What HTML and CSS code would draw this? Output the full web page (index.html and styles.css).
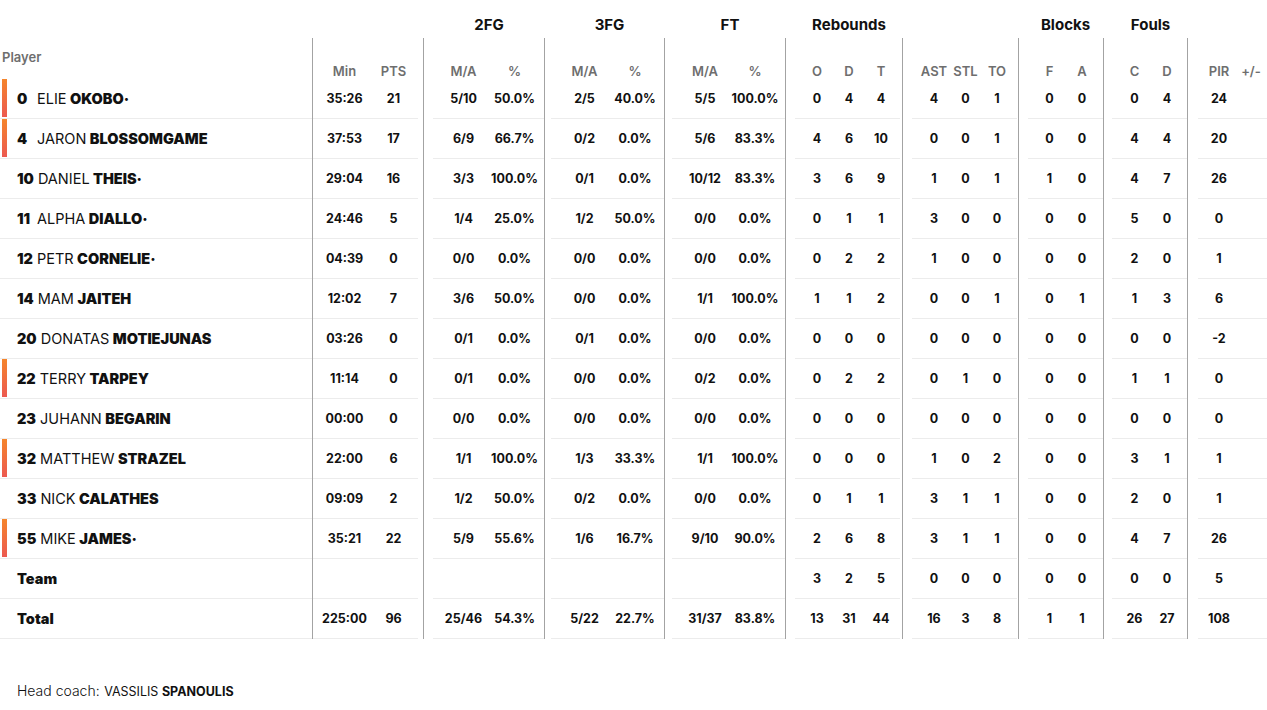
FILE: index.html
```html
<!DOCTYPE html>
<html lang="en">
<head>
<meta charset="utf-8">
<title>Box score</title>
<link rel="stylesheet" href="styles.css">
</head>
<body>
<div class="box">
  <div class="trow">
    <div class="seg g-player"><div class="in"></div></div>
    <div class="seg g-min"><div class="in"></div></div>
    <div class="seg g-2fg"><div class="in"><span class="title">2FG</span></div></div>
    <div class="seg g-3fg"><div class="in"><span class="title">3FG</span></div></div>
    <div class="seg g-ft"><div class="in"><span class="title">FT</span></div></div>
    <div class="seg g-reb"><div class="in"><span class="title">Rebounds</span></div></div>
    <div class="seg g-misc"><div class="in"></div></div>
    <div class="seg g-blk"><div class="in"><span class="title">Blocks</span></div></div>
    <div class="seg g-fls"><div class="in"><span class="title">Fouls</span></div></div>
    <div class="seg g-pir"><div class="in"></div></div>
  </div>
  <div class="hrow">
    <div class="seg g-player"><div class="in"><span class="plabel">Player</span></div></div>
    <div class="seg g-min"><div class="in"><span>Min</span><span>PTS</span></div></div>
    <div class="seg g-2fg"><div class="in"><span>M/A</span><span>%</span></div></div>
    <div class="seg g-3fg"><div class="in"><span>M/A</span><span>%</span></div></div>
    <div class="seg g-ft"><div class="in"><span>M/A</span><span>%</span></div></div>
    <div class="seg g-reb"><div class="in"><span>O</span><span>D</span><span>T</span></div></div>
    <div class="seg g-misc"><div class="in"><span>AST</span><span>STL</span><span>TO</span></div></div>
    <div class="seg g-blk"><div class="in"><span>F</span><span>A</span></div></div>
    <div class="seg g-fls"><div class="in"><span>C</span><span>D</span></div></div>
    <div class="seg g-pir"><div class="in"><span>PIR</span><span>+/-</span></div></div>
  </div>

  <div class="row">
    <div class="seg g-player"><div class="in"><i class="bar on"></i><b class="num">0</b><span class="first">ELIE</span>&nbsp;<b>OKOBO·</b></div></div>
    <div class="seg g-min"><div class="in"><span>35:26</span><span>21</span></div></div>
    <div class="seg g-2fg"><div class="in"><span>5/10</span><span>50.0%</span></div></div>
    <div class="seg g-3fg"><div class="in"><span>2/5</span><span>40.0%</span></div></div>
    <div class="seg g-ft"><div class="in"><span>5/5</span><span>100.0%</span></div></div>
    <div class="seg g-reb"><div class="in"><span>0</span><span>4</span><span>4</span></div></div>
    <div class="seg g-misc"><div class="in"><span>4</span><span>0</span><span>1</span></div></div>
    <div class="seg g-blk"><div class="in"><span>0</span><span>0</span></div></div>
    <div class="seg g-fls"><div class="in"><span>0</span><span>4</span></div></div>
    <div class="seg g-pir"><div class="in"><span>24</span><span></span></div></div>
  </div>
  <div class="row">
    <div class="seg g-player"><div class="in"><i class="bar on"></i><b class="num">4</b><span class="first">JARON</span>&nbsp;<b>BLOSSOMGAME</b></div></div>
    <div class="seg g-min"><div class="in"><span>37:53</span><span>17</span></div></div>
    <div class="seg g-2fg"><div class="in"><span>6/9</span><span>66.7%</span></div></div>
    <div class="seg g-3fg"><div class="in"><span>0/2</span><span>0.0%</span></div></div>
    <div class="seg g-ft"><div class="in"><span>5/6</span><span>83.3%</span></div></div>
    <div class="seg g-reb"><div class="in"><span>4</span><span>6</span><span>10</span></div></div>
    <div class="seg g-misc"><div class="in"><span>0</span><span>0</span><span>1</span></div></div>
    <div class="seg g-blk"><div class="in"><span>0</span><span>0</span></div></div>
    <div class="seg g-fls"><div class="in"><span>4</span><span>4</span></div></div>
    <div class="seg g-pir"><div class="in"><span>20</span><span></span></div></div>
  </div>
  <div class="row">
    <div class="seg g-player"><div class="in"><i class="bar"></i><b class="num">10</b><span class="first">DANIEL</span>&nbsp;<b>THEIS·</b></div></div>
    <div class="seg g-min"><div class="in"><span>29:04</span><span>16</span></div></div>
    <div class="seg g-2fg"><div class="in"><span>3/3</span><span>100.0%</span></div></div>
    <div class="seg g-3fg"><div class="in"><span>0/1</span><span>0.0%</span></div></div>
    <div class="seg g-ft"><div class="in"><span>10/12</span><span>83.3%</span></div></div>
    <div class="seg g-reb"><div class="in"><span>3</span><span>6</span><span>9</span></div></div>
    <div class="seg g-misc"><div class="in"><span>1</span><span>0</span><span>1</span></div></div>
    <div class="seg g-blk"><div class="in"><span>1</span><span>0</span></div></div>
    <div class="seg g-fls"><div class="in"><span>4</span><span>7</span></div></div>
    <div class="seg g-pir"><div class="in"><span>26</span><span></span></div></div>
  </div>
  <div class="row">
    <div class="seg g-player"><div class="in"><i class="bar"></i><b class="num">11</b><span class="first">ALPHA</span>&nbsp;<b>DIALLO·</b></div></div>
    <div class="seg g-min"><div class="in"><span>24:46</span><span>5</span></div></div>
    <div class="seg g-2fg"><div class="in"><span>1/4</span><span>25.0%</span></div></div>
    <div class="seg g-3fg"><div class="in"><span>1/2</span><span>50.0%</span></div></div>
    <div class="seg g-ft"><div class="in"><span>0/0</span><span>0.0%</span></div></div>
    <div class="seg g-reb"><div class="in"><span>0</span><span>1</span><span>1</span></div></div>
    <div class="seg g-misc"><div class="in"><span>3</span><span>0</span><span>0</span></div></div>
    <div class="seg g-blk"><div class="in"><span>0</span><span>0</span></div></div>
    <div class="seg g-fls"><div class="in"><span>5</span><span>0</span></div></div>
    <div class="seg g-pir"><div class="in"><span>0</span><span></span></div></div>
  </div>
  <div class="row">
    <div class="seg g-player"><div class="in"><i class="bar"></i><b class="num">12</b><span class="first">PETR</span>&nbsp;<b>CORNELIE·</b></div></div>
    <div class="seg g-min"><div class="in"><span>04:39</span><span>0</span></div></div>
    <div class="seg g-2fg"><div class="in"><span>0/0</span><span>0.0%</span></div></div>
    <div class="seg g-3fg"><div class="in"><span>0/0</span><span>0.0%</span></div></div>
    <div class="seg g-ft"><div class="in"><span>0/0</span><span>0.0%</span></div></div>
    <div class="seg g-reb"><div class="in"><span>0</span><span>2</span><span>2</span></div></div>
    <div class="seg g-misc"><div class="in"><span>1</span><span>0</span><span>0</span></div></div>
    <div class="seg g-blk"><div class="in"><span>0</span><span>0</span></div></div>
    <div class="seg g-fls"><div class="in"><span>2</span><span>0</span></div></div>
    <div class="seg g-pir"><div class="in"><span>1</span><span></span></div></div>
  </div>
  <div class="row">
    <div class="seg g-player"><div class="in"><i class="bar"></i><b class="num">14</b><span class="first">MAM</span>&nbsp;<b>JAITEH</b></div></div>
    <div class="seg g-min"><div class="in"><span>12:02</span><span>7</span></div></div>
    <div class="seg g-2fg"><div class="in"><span>3/6</span><span>50.0%</span></div></div>
    <div class="seg g-3fg"><div class="in"><span>0/0</span><span>0.0%</span></div></div>
    <div class="seg g-ft"><div class="in"><span>1/1</span><span>100.0%</span></div></div>
    <div class="seg g-reb"><div class="in"><span>1</span><span>1</span><span>2</span></div></div>
    <div class="seg g-misc"><div class="in"><span>0</span><span>0</span><span>1</span></div></div>
    <div class="seg g-blk"><div class="in"><span>0</span><span>1</span></div></div>
    <div class="seg g-fls"><div class="in"><span>1</span><span>3</span></div></div>
    <div class="seg g-pir"><div class="in"><span>6</span><span></span></div></div>
  </div>
  <div class="row">
    <div class="seg g-player"><div class="in"><i class="bar"></i><b class="num">20</b><span class="first">DONATAS</span>&nbsp;<b>MOTIEJUNAS</b></div></div>
    <div class="seg g-min"><div class="in"><span>03:26</span><span>0</span></div></div>
    <div class="seg g-2fg"><div class="in"><span>0/1</span><span>0.0%</span></div></div>
    <div class="seg g-3fg"><div class="in"><span>0/1</span><span>0.0%</span></div></div>
    <div class="seg g-ft"><div class="in"><span>0/0</span><span>0.0%</span></div></div>
    <div class="seg g-reb"><div class="in"><span>0</span><span>0</span><span>0</span></div></div>
    <div class="seg g-misc"><div class="in"><span>0</span><span>0</span><span>0</span></div></div>
    <div class="seg g-blk"><div class="in"><span>0</span><span>0</span></div></div>
    <div class="seg g-fls"><div class="in"><span>0</span><span>0</span></div></div>
    <div class="seg g-pir"><div class="in"><span>-2</span><span></span></div></div>
  </div>
  <div class="row">
    <div class="seg g-player"><div class="in"><i class="bar on"></i><b class="num">22</b><span class="first">TERRY</span>&nbsp;<b>TARPEY</b></div></div>
    <div class="seg g-min"><div class="in"><span>11:14</span><span>0</span></div></div>
    <div class="seg g-2fg"><div class="in"><span>0/1</span><span>0.0%</span></div></div>
    <div class="seg g-3fg"><div class="in"><span>0/0</span><span>0.0%</span></div></div>
    <div class="seg g-ft"><div class="in"><span>0/2</span><span>0.0%</span></div></div>
    <div class="seg g-reb"><div class="in"><span>0</span><span>2</span><span>2</span></div></div>
    <div class="seg g-misc"><div class="in"><span>0</span><span>1</span><span>0</span></div></div>
    <div class="seg g-blk"><div class="in"><span>0</span><span>0</span></div></div>
    <div class="seg g-fls"><div class="in"><span>1</span><span>1</span></div></div>
    <div class="seg g-pir"><div class="in"><span>0</span><span></span></div></div>
  </div>
  <div class="row">
    <div class="seg g-player"><div class="in"><i class="bar"></i><b class="num">23</b><span class="first">JUHANN</span>&nbsp;<b>BEGARIN</b></div></div>
    <div class="seg g-min"><div class="in"><span>00:00</span><span>0</span></div></div>
    <div class="seg g-2fg"><div class="in"><span>0/0</span><span>0.0%</span></div></div>
    <div class="seg g-3fg"><div class="in"><span>0/0</span><span>0.0%</span></div></div>
    <div class="seg g-ft"><div class="in"><span>0/0</span><span>0.0%</span></div></div>
    <div class="seg g-reb"><div class="in"><span>0</span><span>0</span><span>0</span></div></div>
    <div class="seg g-misc"><div class="in"><span>0</span><span>0</span><span>0</span></div></div>
    <div class="seg g-blk"><div class="in"><span>0</span><span>0</span></div></div>
    <div class="seg g-fls"><div class="in"><span>0</span><span>0</span></div></div>
    <div class="seg g-pir"><div class="in"><span>0</span><span></span></div></div>
  </div>
  <div class="row">
    <div class="seg g-player"><div class="in"><i class="bar on"></i><b class="num">32</b><span class="first">MATTHEW</span>&nbsp;<b>STRAZEL</b></div></div>
    <div class="seg g-min"><div class="in"><span>22:00</span><span>6</span></div></div>
    <div class="seg g-2fg"><div class="in"><span>1/1</span><span>100.0%</span></div></div>
    <div class="seg g-3fg"><div class="in"><span>1/3</span><span>33.3%</span></div></div>
    <div class="seg g-ft"><div class="in"><span>1/1</span><span>100.0%</span></div></div>
    <div class="seg g-reb"><div class="in"><span>0</span><span>0</span><span>0</span></div></div>
    <div class="seg g-misc"><div class="in"><span>1</span><span>0</span><span>2</span></div></div>
    <div class="seg g-blk"><div class="in"><span>0</span><span>0</span></div></div>
    <div class="seg g-fls"><div class="in"><span>3</span><span>1</span></div></div>
    <div class="seg g-pir"><div class="in"><span>1</span><span></span></div></div>
  </div>
  <div class="row">
    <div class="seg g-player"><div class="in"><i class="bar"></i><b class="num">33</b><span class="first">NICK</span>&nbsp;<b>CALATHES</b></div></div>
    <div class="seg g-min"><div class="in"><span>09:09</span><span>2</span></div></div>
    <div class="seg g-2fg"><div class="in"><span>1/2</span><span>50.0%</span></div></div>
    <div class="seg g-3fg"><div class="in"><span>0/2</span><span>0.0%</span></div></div>
    <div class="seg g-ft"><div class="in"><span>0/0</span><span>0.0%</span></div></div>
    <div class="seg g-reb"><div class="in"><span>0</span><span>1</span><span>1</span></div></div>
    <div class="seg g-misc"><div class="in"><span>3</span><span>1</span><span>1</span></div></div>
    <div class="seg g-blk"><div class="in"><span>0</span><span>0</span></div></div>
    <div class="seg g-fls"><div class="in"><span>2</span><span>0</span></div></div>
    <div class="seg g-pir"><div class="in"><span>1</span><span></span></div></div>
  </div>
  <div class="row">
    <div class="seg g-player"><div class="in"><i class="bar on"></i><b class="num">55</b><span class="first">MIKE</span>&nbsp;<b>JAMES·</b></div></div>
    <div class="seg g-min"><div class="in"><span>35:21</span><span>22</span></div></div>
    <div class="seg g-2fg"><div class="in"><span>5/9</span><span>55.6%</span></div></div>
    <div class="seg g-3fg"><div class="in"><span>1/6</span><span>16.7%</span></div></div>
    <div class="seg g-ft"><div class="in"><span>9/10</span><span>90.0%</span></div></div>
    <div class="seg g-reb"><div class="in"><span>2</span><span>6</span><span>8</span></div></div>
    <div class="seg g-misc"><div class="in"><span>3</span><span>1</span><span>1</span></div></div>
    <div class="seg g-blk"><div class="in"><span>0</span><span>0</span></div></div>
    <div class="seg g-fls"><div class="in"><span>4</span><span>7</span></div></div>
    <div class="seg g-pir"><div class="in"><span>26</span><span></span></div></div>
  </div>
  <div class="row">
    <div class="seg g-player"><div class="in"><i class="bar"></i><b>Team</b></div></div>
    <div class="seg g-min"><div class="in"><span></span><span></span></div></div>
    <div class="seg g-2fg"><div class="in"><span></span><span></span></div></div>
    <div class="seg g-3fg"><div class="in"><span></span><span></span></div></div>
    <div class="seg g-ft"><div class="in"><span></span><span></span></div></div>
    <div class="seg g-reb"><div class="in"><span>3</span><span>2</span><span>5</span></div></div>
    <div class="seg g-misc"><div class="in"><span>0</span><span>0</span><span>0</span></div></div>
    <div class="seg g-blk"><div class="in"><span>0</span><span>0</span></div></div>
    <div class="seg g-fls"><div class="in"><span>0</span><span>0</span></div></div>
    <div class="seg g-pir"><div class="in"><span>5</span><span></span></div></div>
  </div>
  <div class="row">
    <div class="seg g-player"><div class="in"><i class="bar"></i><b>Total</b></div></div>
    <div class="seg g-min"><div class="in"><span>225:00</span><span>96</span></div></div>
    <div class="seg g-2fg"><div class="in"><span>25/46</span><span>54.3%</span></div></div>
    <div class="seg g-3fg"><div class="in"><span>5/22</span><span>22.7%</span></div></div>
    <div class="seg g-ft"><div class="in"><span>31/37</span><span>83.8%</span></div></div>
    <div class="seg g-reb"><div class="in"><span>13</span><span>31</span><span>44</span></div></div>
    <div class="seg g-misc"><div class="in"><span>16</span><span>3</span><span>8</span></div></div>
    <div class="seg g-blk"><div class="in"><span>1</span><span>1</span></div></div>
    <div class="seg g-fls"><div class="in"><span>26</span><span>27</span></div></div>
    <div class="seg g-pir"><div class="in"><span>108</span><span></span></div></div>
  </div>
</div>
<div class="coach"><span class="lbl">Head coach:</span> <span class="cname">VASSILIS <b>SPANOULIS</b></span></div>
</body>
</html>
```
FILE: styles.css
```css
html, body {
  margin: 0;
  padding: 0;
  background: #fff;
}
body {
  font-family: "Inter", "Liberation Sans", sans-serif;
  color: #111;
}
.box {
  display: flex;
  flex-direction: column;
  width: 1267px;
}
.trow, .hrow, .row {
  display: flex;
}
.seg {
  box-sizing: border-box;
  width: var(--w);
  flex: none;
  border-left: 1px solid #a3a3a3;
  padding-left: var(--pl);
  padding-right: var(--mr, 0px);
}
.seg > .in {
  box-sizing: border-box;
  display: grid;
  grid-template-columns: var(--cols);
  padding-left: var(--ip);
  justify-items: center;
}
.g-player { --w: 312px; --pl: 0px; border-left: none; }
.g-min  { --w: 111px; --pl: 0px; --mr: 5px; --ip: 7px; --cols: 49px 49px; }
.g-2fg  { --w: 121px; --pl: 9px; --ip: 5px; --cols: 51px 51px; }
.g-3fg  { --w: 120px; --pl: 6px; --ip: 8px; --cols: 51px 50px; }
.g-ft   { --w: 121px; --pl: 7px; --ip: 8px; --cols: 50px 50px; }
.g-reb  { --w: 117px; --pl: 9px; --mr: 2px; --ip: 6px; --cols: 32px 32px 32px; }
.g-misc { --w: 116px; --pl: 9px; --mr: 1px; --ip: 6px; --cols: 32px 31px 32px; }
.g-blk  { --w: 85px;  --pl: 9px; --ip: 5px; --cols: 33px 32px; }
.g-fls  { --w: 84px;  --pl: 8px; --ip: 6px; --cols: 33px 32px; }
.g-pir  { --w: 80px;  --pl: 10px; --ip: 5px; --cols: 32px 32px; }

/* title row */
.trow .seg { border-left-color: transparent; }
.trow .in {
  height: 38px;
  padding-top: 16px;
}
.title {
  grid-column: 1 / -1;
  font-size: 15px;
  line-height: 18px;
  font-weight: 700;
  color: #111;
  white-space: nowrap;
}

/* sub header row */
.hrow .in {
  height: 41px;
  padding-top: 26px;
  font-size: 13px;
  line-height: 14px;
  font-weight: 600;
  color: #6e6e6e;
}
.hrow .g-player .in {
  display: block;
  padding-top: 12px;
  padding-left: 2px;
}
.plabel {
  font-size: 13px;
  font-weight: 600;
  color: #6e6e6e;
}

/* data rows */
.row .in {
  height: 40px;
  border-bottom: 1px solid #ececec;
  align-items: center;
  padding-bottom: 1px;
  font-size: 12.5px;
  font-weight: 700;
  white-space: nowrap;
}
.row .g-player .in {
  display: flex;
  align-items: center;
  padding-left: 0;
  padding-bottom: 1px;
  font-size: 14.5px;
  font-weight: 700;
}
.bar {
  align-self: stretch;
  flex: none;
  width: 5px;
  margin: 0 10px 0 2px;
}
.bar.on {
  background: linear-gradient(#f5852c, #ec5950);
}
.num {
  display: inline-block;
  min-width: 16px;
  margin-right: 4px;
}
.first {
  font-weight: 400;
}

/* coach */
.coach {
  margin-top: 42px;
  padding-left: 17px;
  line-height: 18px;
  color: #111;
}
.coach .lbl {
  font-size: 14px;
  font-weight: 300;
}
.coach .cname {
  font-size: 12.5px;
  font-weight: 400;
}
.coach b {
  font-weight: 700;
}
```
